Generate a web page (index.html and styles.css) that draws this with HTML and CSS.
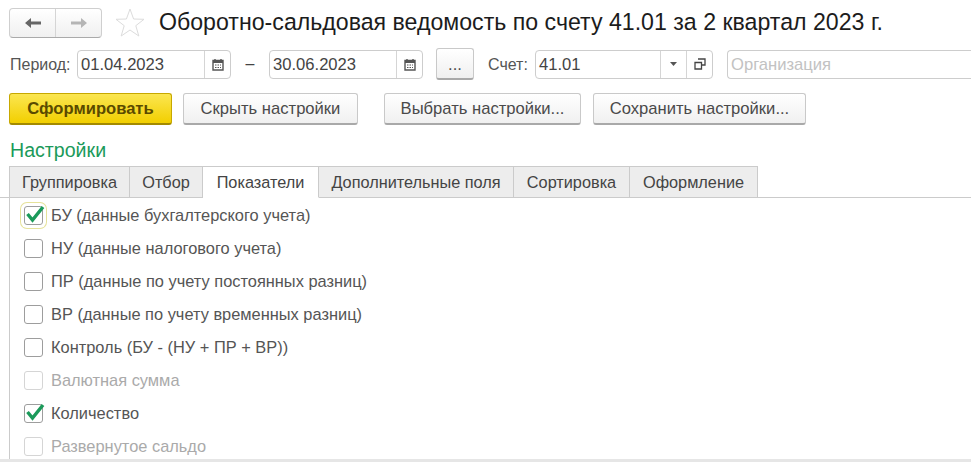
FILE: index.html
```html
<!DOCTYPE html>
<html lang="ru">
<head>
    <meta charset="UTF-8">
    <meta name="viewport" content="width=device-width, initial-scale=1.0">
    <title>Оборотно-сальдовая ведомость</title>
    <link rel="stylesheet" href="styles.css">
</head>
<body>
    <header class="title-row">
        <div class="nav-buttons">
            <button class="nav-btn">
                <svg width="18" height="12" viewBox="0 0 18 12"><path d="M1 6 L7 1 V4.5 H17 V7.5 H7 V11 Z" fill="#666"/></svg>
            </button>
            <button class="nav-btn">
                <svg width="18" height="12" viewBox="0 0 18 12"><path d="M17 6 L11 1 V4.5 H1 V7.5 H11 V11 Z" fill="#b5b5b5"/></svg>
            </button>
        </div>
        <svg class="star" width="30" height="29" viewBox="0 0 30 29"><path d="M15 1 L18.6 11 L29 11.3 L20.8 17.7 L23.8 28 L15 22 L6.2 28 L9.2 17.7 L1 11.3 L11.4 11 Z" fill="#fff" stroke="#dcdcdc"/></svg>
        <h1>Оборотно-сальдовая ведомость по счету 41.01 за 2 квартал 2023 г.</h1>
    </header>

    <div class="period-row">
        <label class="lbl-period">Период:</label>
        <div class="field field-date">
            <span class="field-text">01.04.2023</span>
            <span class="field-btn"><svg width="12" height="13" viewBox="0 0 12 13"><path d="M1 2.5 H11 V12 H1 Z M3 1 V3 M9 1 V3" fill="none" stroke="#555" stroke-width="1.4"/><path d="M1 3 H11 V5 H1 Z" fill="#555"/><path d="M3 7 H9 M3 9.5 H9" stroke="#555" stroke-dasharray="1.5 1"/></svg></span>
        </div>
        <span class="dash">–</span>
        <div class="field field-date">
            <span class="field-text">30.06.2023</span>
            <span class="field-btn"><svg width="12" height="13" viewBox="0 0 12 13"><path d="M1 2.5 H11 V12 H1 Z M3 1 V3 M9 1 V3" fill="none" stroke="#555" stroke-width="1.4"/><path d="M1 3 H11 V5 H1 Z" fill="#555"/><path d="M3 7 H9 M3 9.5 H9" stroke="#555" stroke-dasharray="1.5 1"/></svg></span>
        </div>
        <button class="btn btn-dots">...</button>
        <label class="lbl-account">Счет:</label>
        <div class="field field-account">
            <span class="field-text">41.01</span>
            <span class="field-btn"><svg width="7" height="4" viewBox="0 0 7 4"><path d="M0 0 H7 L3.5 4 Z" fill="#555"/></svg></span>
            <span class="field-btn"><svg width="12" height="12" viewBox="0 0 12 12"><path d="M4 1 H11 V7 H8 M1 4.5 H7.5 V11 H1 Z" fill="none" stroke="#444" stroke-width="1.3"/></svg></span>
        </div>
        <div class="field field-org">
            <span class="field-text placeholder">Организация</span>
        </div>
    </div>

    <div class="actions-row">
        <button class="btn btn-primary">Сформировать</button>
        <button class="btn btn-hide">Скрыть настройки</button>
        <button class="btn btn-choose">Выбрать настройки...</button>
        <button class="btn btn-save">Сохранить настройки...</button>
    </div>

    <h2 class="section-title">Настройки</h2>

    <div class="tabs">
        <div class="tab tab-1">Группировка</div>
        <div class="tab tab-2">Отбор</div>
        <div class="tab tab-3 active">Показатели</div>
        <div class="tab tab-4">Дополнительные поля</div>
        <div class="tab tab-5">Сортировка</div>
        <div class="tab tab-6">Оформление</div>
    </div>

    <div class="tab-body">
        <div class="check-row">
            <span class="checkbox focused"><svg width="22" height="20" viewBox="0 0 22 20"><path d="M3.5 10 L8.5 16 L19 3" fill="none" stroke="#1b9a5a" stroke-width="3.4"/></svg></span>
            <span>БУ (данные бухгалтерского учета)</span>
        </div>
        <div class="check-row"><span class="checkbox"></span><span>НУ (данные налогового учета)</span></div>
        <div class="check-row"><span class="checkbox"></span><span>ПР (данные по учету постоянных разниц)</span></div>
        <div class="check-row"><span class="checkbox"></span><span>ВР (данные по учету временных разниц)</span></div>
        <div class="check-row"><span class="checkbox"></span><span>Контроль (БУ - (НУ + ПР + ВР))</span></div>
        <div class="check-row disabled"><span class="checkbox"></span><span>Валютная сумма</span></div>
        <div class="check-row">
            <span class="checkbox"><svg width="22" height="20" viewBox="0 0 22 20"><path d="M3.5 10 L8.5 16 L19 3" fill="none" stroke="#1b9a5a" stroke-width="3.4"/></svg></span>
            <span>Количество</span>
        </div>
        <div class="check-row disabled"><span class="checkbox"></span><span>Развернутое сальдо</span></div>
    </div>
    <div class="bottom-line"></div>
</body>
</html>
```

FILE: styles.css
```css
html, body {
  height: 462px;
  overflow: hidden;
}
body {
  margin: 0;
  padding: 0;
  background: #fff;
  font-family: "Liberation Sans", Arial, sans-serif;
  font-size: 16px;
  color: #3a3a3a;
}
button {
  font-family: inherit;
}
.title-row {
  display: flex;
  align-items: center;
  height: 31px;
  padding: 7px 0 0 9px;
}
.nav-buttons {
  display: flex;
  width: 93px;
  height: 30px;
  box-sizing: border-box;
  border: 1px solid #cfcfcf;
  border-bottom-color: #aaa;
  border-radius: 4px;
  background: linear-gradient(#fff, #f0f0f0);
}
.nav-btn {
  flex: 1;
  border: none;
  background: none;
  padding: 0;
  display: flex;
  align-items: center;
  justify-content: center;
}
.nav-btn + .nav-btn {
  border-left: 1px solid #d5d5d5;
}
.star {
  margin-left: 13px;
}
h1 {
  margin: 0 0 0 14px;
  font-size: 23.15px;
  font-weight: normal;
  color: #1c1c1c;
  white-space: nowrap;
}
.period-row {
  display: flex;
  align-items: center;
  height: 32px;
  margin-top: 10px;
  padding-left: 10px;
}
.lbl-period {
  width: 67px;
  padding-top: 2px;
  color: #555;
}
.field {
  display: flex;
  align-items: stretch;
  height: 29px;
  box-sizing: border-box;
  border: 1px solid #cdcdcd;
  border-radius: 4px;
  background: #fff;
  font-size: 16.6px;
}
.field-text {
  flex: 1;
  align-self: center;
  padding: 2px 0 0 3px;
  color: #444;
}
.placeholder {
  color: #c2c2c2;
}
.field-btn {
  width: 25px;
  border-left: 1px solid #d5d5d5;
  display: flex;
  align-items: center;
  justify-content: center;
}
.field-date {
  width: 154px;
}
.dash {
  width: 38px;
  text-align: center;
  color: #444;
}
.btn-dots {
  width: 38px;
  height: 32px;
  margin-left: 13px;
  padding: 8px 0 0;
  font-size: 12px;
  color: #777;
}
.lbl-account {
  width: 47px;
  margin-left: 14px;
  padding-top: 2px;
  color: #555;
}
.field-account {
  width: 178px;
}
.field-org {
  flex: 1;
  margin-left: 14px;
  border-right: none;
  border-radius: 4px 0 0 4px;
}
.actions-row {
  display: flex;
  margin-top: 13px;
  padding-left: 9px;
}
.btn {
  height: 32px;
  box-sizing: border-box;
  padding-top: 2px;
  border: 1px solid #c9c9c9;
  border-bottom: 2px solid #a9a9a9;
  border-radius: 3px;
  background: linear-gradient(#fff, #f0f0f0);
  color: #4a4a4a;
  font-size: 16.6px;
}
.btn-primary {
  width: 163px;
  border-color: #c7a800;
  border-bottom-color: #a38a00;
  background: linear-gradient(#fbe651, #f2cf00);
  color: #5a4a00;
  font-weight: bold;
}
.btn-hide {
  width: 175px;
  margin-left: 11px;
}
.btn-choose {
  width: 197px;
  margin-left: 26px;
}
.btn-save {
  width: 213px;
  margin-left: 12px;
}
.section-title {
  margin: 14px 0 0 10px;
  font-size: 19.6px;
  line-height: 22px;
  font-weight: normal;
  color: #1b9a5a;
}
.tabs {
  display: flex;
  height: 32px;
  box-sizing: border-box;
  margin-top: 5px;
  padding-left: 9px;
  border-bottom: 1px solid #cbcbcb;
}
.tab {
  box-sizing: border-box;
  height: 32px;
  line-height: 30px;
  text-align: center;
  background: #ededed;
  border: 1px solid #cbcbcb;
  border-left: none;
  font-size: 16.3px;
  color: #444;
}
.tab:first-child {
  border-left: 1px solid #cbcbcb;
}
.tab.active {
  background: #fff;
  border-bottom-color: #fff;
}
.tab-1 { width: 121px; }
.tab-2 { width: 73px; }
.tab-3 { width: 116px; }
.tab-4 { width: 195px; }
.tab-5 { width: 116px; }
.tab-6 { width: 128px; }
.tab-body {
  height: 261px;
  margin-left: 9px;
  box-sizing: border-box;
  padding: 1px 0 0 14px;
  border-left: 1px solid #cbcbcb;
}
.check-row {
  display: flex;
  align-items: center;
  height: 33px;
  font-size: 16.4px;
  color: #555;
}
.checkbox {
  position: relative;
  width: 19px;
  height: 19px;
  box-sizing: border-box;
  margin-right: 8px;
  border: 1px solid #9d9d9d;
  border-radius: 3px;
  background: #fff;
}
.checkbox svg {
  position: absolute;
  left: -1px;
  top: -3px;
}
.checkbox.focused {
  box-shadow: 0 0 0 3px #fff, 0 0 0 4px #e6e29a;
}
.disabled {
  color: #aaa;
}
.disabled .checkbox {
  border-color: #d5d5d5;
}
.bottom-line {
  height: 3px;
  background: #e6e6e6;
}
```
